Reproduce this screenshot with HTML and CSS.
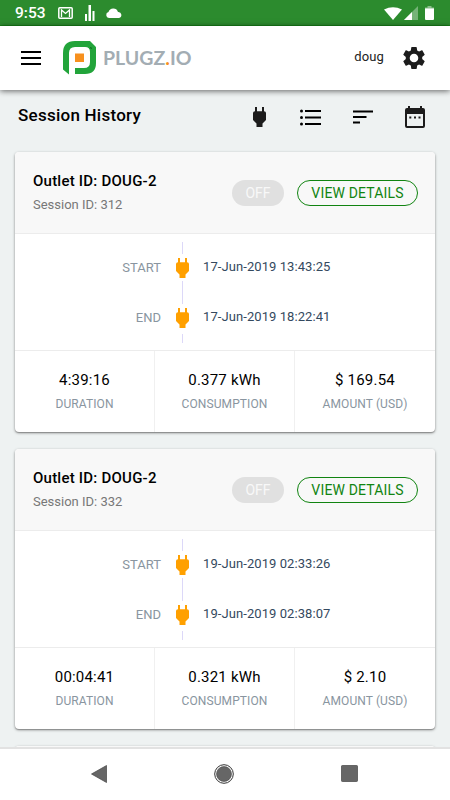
FILE: index.html
```html
<!DOCTYPE html>
<html lang="en">
<head>
  <meta charset="utf-8">
  <meta name="viewport" content="width=device-width, initial-scale=1">
  <title>Session History</title>
  <link rel="stylesheet" href="styles.css">
</head>
<body>
  <svg class="sprite">
    <symbol id="plug" viewBox="0 0 13 20">
      <path d="M2 0h2v4.300h5V0h2v4.300Q13 4.300 13 6v7l-3.500 3.500V20h-6v-3.500L0 13V6q0-1.700 2-1.700z"/>
    </symbol>
  </svg>

  <div class="status-bar">
    <span class="clock">9:53</span>
    <svg class="mail" width="15" height="12" viewBox="0 0 15 12"><rect x=".8" y=".8" width="13.400" height="10.400" rx="1" fill="none" stroke="#fff" stroke-width="1.500"/><path d="M3.500 10V3l4 3.400L11.500 3v7" fill="none" stroke="#fff" stroke-width="1.300"/></svg>
    <svg class="bars" width="10" height="16" viewBox="0 0 10 16"><path d="M0 9h2v7H0zM3.500 0H6v16H3.500zM7.500 6h2v10h-2z" fill="#fff"/></svg>
    <svg class="cloud" width="16" height="10" viewBox="0 0 16 10"><path d="M3 10a3 3 0 0 1-.5-5.900A5 5 0 0 1 12 3.900 3.100 3.100 0 0 1 13 10z" fill="#fff"/></svg>
    <svg class="wifi" width="18" height="13" viewBox="0 0 18 13"><path d="M0 2.500Q9-2.200 18 2.500L9 13z" fill="#fff"/></svg>
    <svg class="signal" width="14" height="14" viewBox="0 0 14 14"><path d="M14 0v14H0z" fill="#fff" opacity=".35"/><path d="M8 6v8H0z" fill="#fff"/></svg>
    <svg class="battery" width="9" height="14" viewBox="0 0 9 14"><path d="M2.500 0h4v1.500H9V4H0V1.500h2.500z" fill="#fff" opacity=".45"/><path d="M0 2.500h9V13q0 1-1 1H1q-1 0-1-1z" fill="#fff"/></svg>
  </div>

  <header class="app-bar">
    <svg class="menu" width="20" height="14" viewBox="0 0 20 14"><path d="M0 1h20M0 7h20M0 13h20" stroke="#000" stroke-width="2"/></svg>
    <svg class="logo" width="33" height="34" viewBox="0 0 33 34">
      <path d="M6 33.500 0 28.500V12Q0 0 12 0h15l6 6v16q0 11-11 11H12v-6h9q6 0 6-6V11q0-5-5-5H12q-6 0-6 6z" fill="#22a43a"/>
      <path d="m27 6 2 1-1 1z" fill="#064d10"/>
      <rect x="12" y="12.500" width="9" height="8.500" fill="#f7901e"/>
    </svg>
    <span class="brand">PLUGZ<span class="brand-dot">.</span>IO</span>
    <span class="user">doug</span>
    <svg class="gear" width="22" height="22" viewBox="2 2 20 20"><path fill="#1c1c1c" d="M19.430 12.980c.04-.32.07-.64.07-.98s-.03-.66-.07-.98l2.110-1.650c.19-.15.24-.42.12-.64l-2-3.460c-.12-.22-.39-.3-.61-.22l-2.490 1c-.52-.4-1.080-.73-1.690-.98l-.38-2.650C14.460 2.180 14.250 2 14 2h-4c-.25 0-.46.18-.49.42l-.38 2.650c-.61.25-1.170.59-1.690.98l-2.490-1c-.23-.09-.49 0-.61.22l-2 3.460c-.13.22-.07.49.12.64l2.110 1.650c-.04.32-.07.65-.07.98s.03.66.07.98l-2.110 1.650c-.19.15-.24.42-.12.64l2 3.460c.12.22.39.3.61.22l2.490-1c.52.4 1.080.73 1.690.98l.38 2.650c.03.24.24.42.49.42h4c.25 0 .46-.18.49-.42l.38-2.650c.61-.25 1.170-.59 1.690-.98l2.490 1c.23.09.49 0 .61-.22l2-3.460c.12-.22.07-.49-.12-.64zM12 15.900a3.900 3.900 0 1 1 0-7.800 3.900 3.900 0 0 1 0 7.800z"/></svg>
  </header>

  <main class="content">
    <div class="toolbar">
      <h1>Session History</h1>
      <div class="tools">
        <svg class="tool-plug" width="13" height="20"><use href="#plug"/></svg>
        <svg width="21" height="17" viewBox="0 0 21 17"><path d="M5 2h16M5 8.500h16M5 15h16" stroke="#000" stroke-width="2"/><circle cx="1.500" cy="2" r="1.500"/><circle cx="1.500" cy="8.500" r="1.500"/><circle cx="1.500" cy="15" r="1.500"/></svg>
        <svg width="20" height="14" viewBox="0 0 20 14"><path d="M0 1.500h20M0 7h13.500M0 12.500h7" stroke="#000" stroke-width="2"/></svg>
        <svg width="20" height="22" viewBox="0 0 20 22"><path fill="#1c1c1c" fill-rule="evenodd" d="M3 0h2v2h10V0h2v2h1q2 0 2 2v16q0 2-2 2H2q-2 0-2-2V4q0-2 2-2h1zM2 8v12h16V8z"/><path fill="#1c1c1c" d="M4.300 10.500h2v2h-2zM9 10.500h2v2H9zM13.500 10.500h2v2h-2z"/></svg>
      </div>
    </div>

    <section class="card">
      <div class="card-header">
        <div class="outlet">
          <h2>Outlet ID: DOUG-2</h2>
          <p>Session ID: 312</p>
        </div>
        <span class="badge">OFF</span>
        <button class="details">VIEW DETAILS</button>
      </div>
      <div class="timeline">
        <i class="line line-top"></i>
        <span class="event">START</span>
        <svg class="plug" width="13" height="20"><use href="#plug"/></svg>
        <span class="time">17-Jun-2019 13:43:25</span>
        <i class="line line-mid"></i>
        <span class="event">END</span>
        <svg class="plug" width="13" height="20"><use href="#plug"/></svg>
        <span class="time">17-Jun-2019 18:22:41</span>
        <i class="line line-end"></i>
      </div>
      <div class="stats">
        <div class="stat"><b>4:39:16</b><span>DURATION</span></div>
        <div class="stat"><b>0.377 kWh</b><span>CONSUMPTION</span></div>
        <div class="stat"><b>$ 169.54</b><span>AMOUNT (USD)</span></div>
      </div>
    </section>

    <section class="card">
      <div class="card-header">
        <div class="outlet">
          <h2>Outlet ID: DOUG-2</h2>
          <p>Session ID: 332</p>
        </div>
        <span class="badge">OFF</span>
        <button class="details">VIEW DETAILS</button>
      </div>
      <div class="timeline">
        <i class="line line-top"></i>
        <span class="event">START</span>
        <svg class="plug" width="13" height="20"><use href="#plug"/></svg>
        <span class="time">19-Jun-2019 02:33:26</span>
        <i class="line line-mid"></i>
        <span class="event">END</span>
        <svg class="plug" width="13" height="20"><use href="#plug"/></svg>
        <span class="time">19-Jun-2019 02:38:07</span>
        <i class="line line-end"></i>
      </div>
      <div class="stats">
        <div class="stat"><b>00:04:41</b><span>DURATION</span></div>
        <div class="stat"><b>0.321 kWh</b><span>CONSUMPTION</span></div>
        <div class="stat"><b>$ 2.10</b><span>AMOUNT (USD)</span></div>
      </div>
    </section>

    <section class="card">
      <div class="card-header"></div>
    </section>
  </main>

  <nav class="nav-bar">
    <svg width="16" height="18" viewBox="0 0 16 18"><path d="M15.500.5v17L.5 9z" fill="#666" stroke="#444" stroke-width=".7"/></svg>
    <svg width="20" height="20" viewBox="0 0 20 20"><circle cx="10" cy="10" r="9.300" fill="#fff" stroke="#333" stroke-width="1"/><circle cx="10" cy="10" r="7.500" fill="#666" stroke="#444" stroke-width=".6"/></svg>
    <svg width="17" height="17" viewBox="0 0 17 17"><rect x=".5" y=".5" width="16" height="16" rx=".8" fill="#666" stroke="#444" stroke-width=".7"/></svg>
  </nav>
</body>
</html>
```
FILE: styles.css
```css
* {
  box-sizing: border-box;
}

body {
  margin: 0;
  height: 800px;
  display: flex;
  flex-direction: column;
  overflow: hidden;
  background: #eef2f2;
  color: #000;
  font-family: Roboto, sans-serif;
}

h1, h2, p {
  margin: 0;
}

svg {
  display: block;
  flex: none;
}

.sprite {
  display: none;
}

/* Status bar */
.status-bar {
  flex: none;
  height: 26px;
  display: flex;
  align-items: center;
  padding: 1px 16px 0 15px;
  background: #2c8b2e;
  border-bottom: 1px solid #178018;
  color: #fff;
}

.clock {
  width: 43px;
  font-size: 15.5px;
  font-weight: 500;
  line-height: 20px;
}

.bars {
  margin-left: 12px;
}

.cloud {
  margin-left: 11px;
}

.wifi {
  margin-left: auto;
}

.signal {
  margin-left: 2px;
}

.battery {
  margin-left: 7px;
}

/* App bar */
.app-bar {
  position: relative;
  z-index: 1;
  flex: none;
  height: 64px;
  display: flex;
  align-items: center;
  padding: 0 25px 0 21px;
  background: #fff;
  box-shadow: 0 1px 6px rgba(0, 0, 0, 0.6);
}

.logo {
  margin-left: 22px;
}

.brand {
  margin-left: 7px;
  font-family: Lato, sans-serif;
  font-size: 19.5px;
  font-weight: 700;
  line-height: 24px;
  color: #a3adb3;
}

.brand-dot {
  color: #f7901e;
}

.user {
  margin: 0 19px 3px auto;
  font-size: 13px;
  line-height: 18px;
  letter-spacing: 0.15px;
  color: #222;
}

/* Sessions */
.content {
  flex: 1;
  min-height: 0;
  overflow: hidden;
  padding: 0 15px;
}

.toolbar {
  height: 62px;
  display: flex;
  align-items: flex-start;
  justify-content: space-between;
  padding: 15px 10px 0 3px;
}

h1 {
  font-size: 17px;
  font-weight: 500;
  line-height: 21px;
  letter-spacing: 0.25px;
}

.tools {
  height: 24px;
  display: flex;
  align-items: center;
  gap: 32px;
}

.tool-plug {
  margin-right: 2px;
  fill: #1c1c1c;
}

.card {
  height: 280px;
  margin-bottom: 17px;
  width: 420px;
  border-radius: 4px;
  background: #fff;
  box-shadow: 0 1px 3px rgba(0, 0, 0, 0.4), 0 1px 1px rgba(0, 0, 0, 0.2);
  overflow: hidden;
}

.card-header {
  height: 82px;
  display: flex;
  align-items: center;
  padding: 0 17px 0 18px;
  background: #f8f8f8;
  border-bottom: 1px solid #ececec;
}

.outlet {
  flex: 1;
}

h2 {
  font-size: 15px;
  font-weight: 500;
  line-height: 20px;
  letter-spacing: 0.23px;
}

.outlet p {
  margin-top: 5px;
  font-size: 13px;
  line-height: 18px;
  color: #777;
}

.badge {
  width: 52px;
  height: 26px;
  margin-right: 13px;
  border-radius: 13px;
  background: #e0e0e0;
  color: #f8f8f8;
  font-size: 14px;
  line-height: 26px;
  text-align: center;
}

.details {
  width: 121px;
  height: 26px;
  padding: 0;
  border: 1px solid #118411;
  border-radius: 13px;
  background: transparent;
  color: #118411;
  font-family: inherit;
  font-size: 14px;
  line-height: 24px;
  letter-spacing: 0.15px;
}

.timeline {
  height: 116px;
  display: grid;
  grid-template-columns: 146px 42px 1fr;
  grid-template-rows: 23px 21px 29px 21px 22px;
  align-items: center;
}

.line {
  grid-column: 2;
  justify-self: center;
  width: 1px;
  background: #dcd8f8;
}

.line-top {
  height: 12px;
  margin-top: 4px;
}

.line-mid {
  height: 23px;
}

.line-end {
  height: 9px;
  margin-bottom: 2px;
}

.event {
  grid-column: 1;
  text-align: right;
  font-size: 13px;
  line-height: 18px;
  color: #8995a0;
}

.plug {
  justify-self: center;
  fill: #ffa000;
}

.time {
  font-size: 13px;
  line-height: 18px;
  letter-spacing: 0.08px;
  margin-bottom: 1px;
  color: #34495e;
}

.stats {
  height: 82px;
  display: grid;
  grid-template-columns: 139px 140px 141px;
  border-top: 1px solid #ececec;
}

.stat {
  display: flex;
  flex-direction: column;
  align-items: center;
  padding-top: 19px;
}

.stat + .stat {
  border-left: 1px solid #f0f0f0;
}

.stat b {
  font-size: 15px;
  font-weight: 400;
  line-height: 20px;
  letter-spacing: 0.2px;
}

.stat span {
  margin-top: 6px;
  font-size: 12px;
  line-height: 16px;
  letter-spacing: 0.1px;
  color: #8995a0;
}

/* Navigation bar */
.nav-bar {
  position: relative;
  flex: none;
  height: 53px;
  display: flex;
  align-items: center;
  justify-content: space-between;
  padding: 0 92px 2px 91px;
  background: #fff;
  border-top: 2px solid #e2e2e2;
}
```
